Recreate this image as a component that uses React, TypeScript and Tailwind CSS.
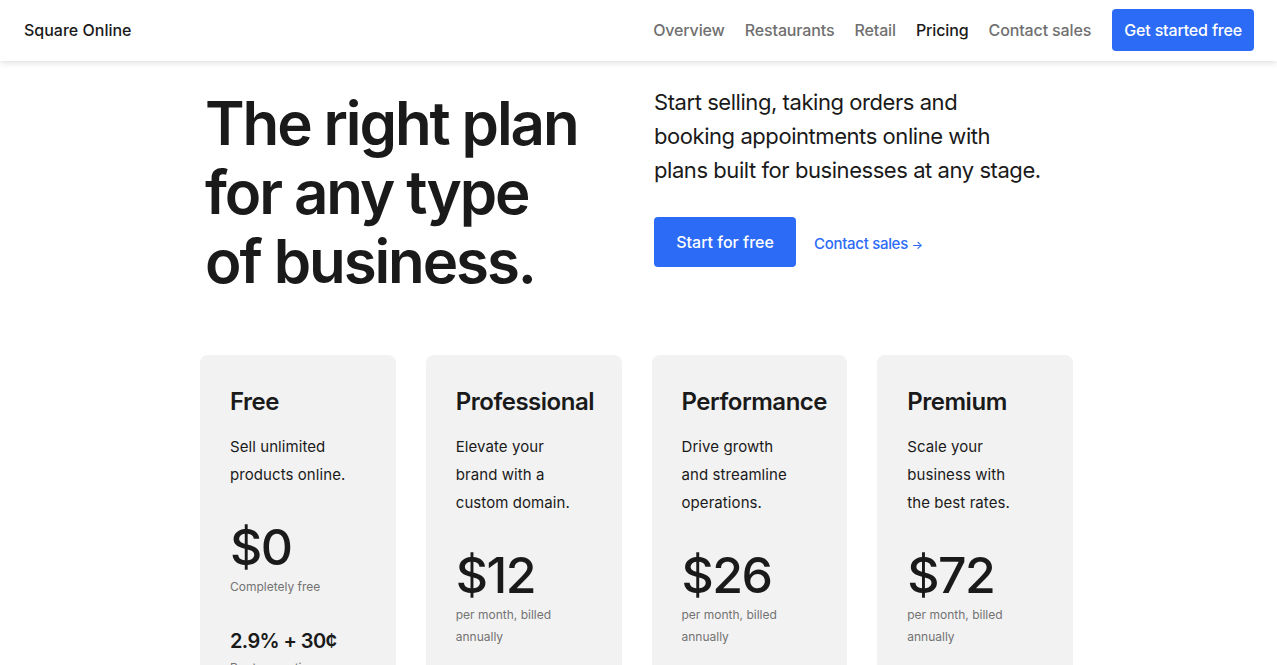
import React from 'react';

const plans = [
  {
    name: 'Free',
    desc: ['Sell unlimited', 'products online.'],
    price: '$0',
    note: ['Completely free'],
    extra: true,
  },
  {
    name: 'Professional',
    desc: ['Elevate your', 'brand with a', 'custom domain.'],
    price: '$12',
    note: ['per month, billed', 'annually'],
  },
  {
    name: 'Performance',
    desc: ['Drive growth', 'and streamline', 'operations.'],
    price: '$26',
    note: ['per month, billed', 'annually'],
  },
  {
    name: 'Premium',
    desc: ['Scale your', 'business with', 'the best rates.'],
    price: '$72',
    note: ['per month, billed', 'annually'],
  },
];

const navItems = ['Overview', 'Restaurants', 'Retail', 'Pricing', 'Contact sales'];

export default function App() {
  return (
    <div className="min-h-screen bg-white text-[#1a1a1a] font-['Inter',sans-serif]">
      {/* Top bar */}
      <header className="h-[61px] pb-[2px] bg-white shadow-[0_2px_6px_rgba(0,0,0,0.12)] flex items-center justify-between pl-6 pr-[23px] relative z-10">
        <div className="text-[16px] font-medium text-[#1a1a1a]">Square Online</div>
        <nav className="flex items-center">
          {navItems.map((item) => (
            <a
              key={item}
              href="#"
              className={`mr-5 text-[16px] font-medium tracking-[-0.008em] ${
                item === 'Pricing' ? 'text-[#1a1a1a]' : 'text-[#707070]'
              }`}
            >
              {item}
            </a>
          ))}
          <a
            href="#"
            className="ml-px h-[42px] px-[12px] flex items-center rounded-[4px] bg-[#2b6bf5] text-white text-[16px] font-medium tracking-[-0.01em]"
          >
            Get started free
          </a>
        </nav>
      </header>

      <div className="pr-1">
        <main className="w-[873px] mx-auto">
          {/* Hero */}
          <section className="grid grid-cols-2 gap-[35px] pt-6">
            <h1 className="mt-1 pl-[5px] text-[60px] leading-[69px] font-semibold tracking-[-0.035em]">
              The right plan
              <br />
              for any type
              <br />
              of business.
            </h1>
            <div>
              <p className="text-[22px] leading-[34px] tracking-[-0.02em] text-[#1a1a1a] whitespace-nowrap">
                Start selling, taking orders and
                <br />
                booking appointments online with
                <br />
                plans built for businesses at any stage.
              </p>
              <div className="mt-[30px] flex items-center">
                <a
                  href="#"
                  className="h-[50px] w-[142px] flex items-center justify-center rounded-[4px] bg-[#2b6bf5] text-white text-[16px] font-medium"
                >
                  Start for free
                </a>
                <a
                  href="#"
                  className="ml-[18px] mt-1 text-[15px] font-medium tracking-[-0.02em] text-[#2b6bf5]"
                >
                  Contact sales <span className="text-[12px]">→</span>
                </a>
              </div>
            </div>
          </section>

          {/* Plans */}
          <section className="grid grid-cols-4 gap-[30px] mt-[59px]">
            {plans.map((plan) => (
              <div
                key={plan.name}
                className="bg-[#f2f2f2] rounded-lg px-[30px] pt-[31px] pb-10 min-h-[400px]"
              >
                <h2 className="text-[24px] leading-[32px] font-semibold tracking-[-0.02em]">
                  {plan.name}
                </h2>
                <p className="mt-[15px] text-[15px] leading-[28px] tracking-[0.005em] text-[#1a1a1a]">
                  {plan.desc.map((line) => (
                    <span key={line} className="block">
                      {line}
                    </span>
                  ))}
                </p>
                <div className="mt-[30px] text-[50px] leading-[56px] font-medium tracking-[-0.03em]">
                  {plan.price}
                </div>
                <p className="mt-px text-[12px] leading-[22px] text-[#737373]">
                  {plan.note.map((line) => (
                    <span key={line} className="block">
                      {line}
                    </span>
                  ))}
                </p>
                {plan.extra && (
                  <>
                    <div className="mt-[29px] text-[20px] leading-[28px] font-semibold tracking-[-0.03em]">
                      2.9% + 30¢
                    </div>
                    <p className="mt-[2px] text-[12px] leading-[22px] text-[#737373]">Per transaction</p>
                  </>
                )}
              </div>
            ))}
          </section>
        </main>
      </div>
    </div>
  );
}
